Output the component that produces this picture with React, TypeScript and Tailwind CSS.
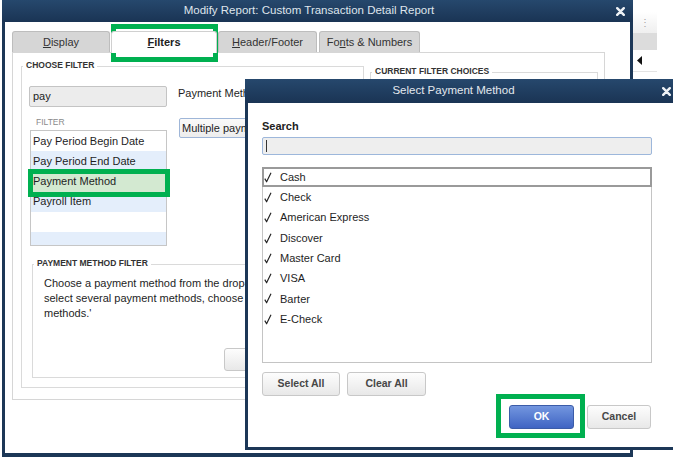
import type { ReactNode } from "react";

const FILTER_ROWS = [
  { label: "Pay Period Begin Date", tone: "bg-white" },
  { label: "Pay Period End Date", tone: "bg-[#e4eefb]" },
  { label: "Payment Method", tone: "bg-[#d3e9d1]" },
  { label: "Payroll Item", tone: "bg-[#e4eefb]" },
  { label: "", tone: "bg-white" },
  { label: "", tone: "bg-[#e4eefb]" },
];

const PAYMENT_METHODS = [
  "Cash",
  "Check",
  "American Express",
  "Discover",
  "Master Card",
  "VISA",
  "Barter",
  "E-Check",
];

function CloseX() {
  return (
    <svg width="9" height="9" viewBox="0 0 9 9">
      <path d="M1.2 1.2L7.8 7.8M7.8 1.2L1.2 7.8" stroke="#eef2f6" strokeWidth="2.4" strokeLinecap="round" />
    </svg>
  );
}

function Tick() {
  return (
    <svg width="8" height="11" viewBox="0 0 8 11" className="shrink-0">
      <path d="M0.8 6.6L2.6 9.8L7 0.8" fill="none" stroke="#222" strokeWidth="1.15" strokeLinejoin="round" />
    </svg>
  );
}

function Group({ title, className, children }: { title: string; className: string; children?: ReactNode }) {
  return (
    <div className={`border border-[#dadada] ${className}`}>
      <div className="-mt-[7px] ml-[1px] w-fit bg-white px-[3px] text-[8.5px] font-bold leading-[11px] text-[#333]">
        {title}
      </div>
      {children}
    </div>
  );
}

function Tab({ children, width, active }: { children: ReactNode; width: string; active?: boolean }) {
  return (
    <div
      className={`flex items-center justify-center rounded-t-[3px] border border-b-0 text-[11px] ${width} ${
        active
          ? "relative z-10 -mb-px h-[22px] border-[#d0d0d0] bg-white font-bold text-[#222]"
          : "h-[21px] border-[#bdbdbd] bg-[#d6d6d6] text-[#333]"
      }`}
    >
      {children}
    </div>
  );
}

const grayButton =
  "flex items-center justify-center rounded-[3px] border border-[#c8c8c8] bg-gradient-to-b from-[#fdfdfd] to-[#e8e8e8] text-[10.5px] font-bold text-[#474747]";

export default function App() {
  return (
    <div className="relative h-[457px] w-[673px] overflow-hidden bg-white font-['Liberation_Sans',Arial,sans-serif] text-[#1e1e1e]">
      {/* strip of the app window behind */}
      <div className="absolute left-[633px] top-0 w-[24px]">
        <div className="h-[12px]" />
        <div className="flex h-[21px] items-center justify-center bg-gradient-to-b from-white to-[#efefef] text-[10px] leading-none text-[#a3a3a3]">
          ⋮
        </div>
        <div className="h-[17px] bg-[#dcdcdc]" />
        <div className="flex h-[22px] items-center border-b border-[#e4e4e4] pl-[4px]">
          <svg width="5" height="9" viewBox="0 0 5 9">
            <polygon points="5,0 5,9 0,4.5" fill="#111" />
          </svg>
        </div>
      </div>

      {/* Modify Report window */}
      <div className="absolute left-[2px] top-0 flex h-[457px] w-[631px] flex-col bg-[#1c3757]">
        <div className="flex h-[22px] shrink-0 items-center bg-gradient-to-b from-[#26486d] to-[#1a3454]">
          <div className="w-[614px] text-center text-[11.5px] text-[#dfe5ec]">
            Modify Report: Custom Transaction Detail Report
          </div>
          <CloseX />
        </div>

        <div className="mx-[3px] mb-[4px] flex-1 bg-white pl-[7px]">
          <div className="mt-[9px] flex items-end">
            <Tab width="w-[98px]">
              <span className="underline">D</span>isplay
            </Tab>
            <div className="ml-[1px]">
              <Tab width="w-[106px]" active>
                <span className="underline">F</span>ilters
              </Tab>
            </div>
            <div className="ml-[1px]">
              <Tab width="w-[99px]">
                <span className="underline">H</span>eader/Footer
              </Tab>
            </div>
            <div className="ml-[2px]">
              <Tab width="w-[101px]">
                Fo<span className="underline">n</span>ts &amp; Numbers
              </Tab>
            </div>
          </div>

          <div className="flex h-[348px] w-[593px] border border-[#d6d6d6] pb-[11px] pl-[8px] pr-[6px] pt-[13px]">
            <Group title="CHOOSE FILTER" className="flex w-[343px] shrink-0 flex-col">
              <div className="ml-[7px] mt-[15px] flex">
                <div className="w-[138px]">
                  <div className="flex h-[21px] items-center rounded-[2px] border border-[#c4c4c4] bg-[#ececec] px-[3px] text-[11px]">
                    pay
                  </div>
                  <div className="ml-[7px] mt-[10px] text-[8.5px] leading-[10px] text-[#8a8a8a]">FILTER</div>
                  <div className="ml-[1px] mt-[3px] h-[116px] w-[137px] overflow-hidden border border-[#c6c6c6]">
                    {FILTER_ROWS.map((r, i) => (
                      <div key={i} className={`flex h-[20.2px] items-center px-[2px] text-[11px] ${r.tone}`}>
                        {r.label}
                      </div>
                    ))}
                  </div>
                </div>
                <div className="ml-[11px] flex-1">
                  <div className="text-[11px] leading-[14px]">Payment Method</div>
                  <div className="ml-[1px] mt-[18px] flex h-[20px] w-[170px] items-center rounded-[2px] border border-[#9fb6d8] bg-gradient-to-b from-[#fafafa] to-[#ededed] px-[2px] text-[11px]">
                    Multiple payment methods
                  </div>
                </div>
              </div>

              <Group title="PAYMENT METHOD FILTER" className="mx-[10px] mt-[18px] pb-[6px]">
                <p className="mt-[7px] pl-[11px] text-[11px] leading-[15px]">
                  Choose a payment method from the drop-down list. To
                  <br />
                  select several payment methods, choose 'Multiple payment
                  <br />
                  methods.'
                </p>
                <div className="mt-[27px] flex justify-end pr-[8px]">
                  <div className={`${grayButton} h-[23px] w-[120px]`}>Select...</div>
                </div>
              </Group>
            </Group>

            <Group title="CURRENT FILTER CHOICES" className="ml-[6px] mt-[6px] flex-1" />
          </div>
        </div>
      </div>

      {/* Select Payment Method dialog */}
      <div className="absolute left-[245px] top-[79px] flex h-[371px] w-[440px] flex-col bg-[#1c3757]">
        <div className="flex h-[24px] shrink-0 items-center bg-gradient-to-b from-[#26486d] to-[#1a3454]">
          <div className="w-[417px] text-center text-[11.5px] text-[#e3e8ee]">Select Payment Method</div>
          <CloseX />
        </div>
        <div className="mb-[3px] ml-[3px] flex-1 bg-white pl-[14px]">
          <div className="w-[390px]">
            <div className="pt-[17px] text-[11px] font-bold leading-[13px] text-[#222]">Search</div>
            <div className="mt-[4px] flex h-[18px] items-center rounded-[2px] border border-[#9db7db] bg-[#eeeeee] pl-[3px]">
              <div className="h-[12px] w-px bg-[#333]" />
            </div>
            <div className="mt-[12px] h-[196px] border border-[#c4c4c4]">
              {PAYMENT_METHODS.map((m, i) => (
                <div
                  key={m}
                  className={`flex h-[20.3px] items-center text-[11px] ${
                    i === 0 ? "-mx-px -mt-px border-2 border-[#9a9a9a]" : "pl-px"
                  }`}
                >
                  <span className="flex w-[16px]">
                    <Tick />
                  </span>
                  <span>{m}</span>
                </div>
              ))}
            </div>
            <div className="mt-[9px] flex gap-[7px]">
              <div className={`${grayButton} h-[24px] w-[78px]`}>Select All</div>
              <div className={`${grayButton} h-[24px] w-[79px]`}>Clear All</div>
            </div>
            <div className="mr-px mt-[9px] flex justify-end gap-[13px]">
              <div className="flex h-[24px] w-[65px] items-center justify-center rounded-[3px] border border-[#3b5ca8] bg-gradient-to-b from-[#7396df] to-[#4064c3] text-[10.5px] font-bold text-white">
                OK
              </div>
              <div className={`${grayButton} h-[24px] w-[64px]`}>Cancel</div>
            </div>
          </div>
        </div>
      </div>

      {/* green call-out frames */}
      <div className="absolute left-[111px] top-[24px] h-[38px] w-[107px] border-[5px] border-[#00b050]" />
      <div className="absolute left-[28px] top-[169px] h-[28px] w-[142px] border-[5px] border-[#00b050]" />
      <div className="absolute left-[496px] top-[394px] h-[44px] w-[89px] border-[5px] border-[#00b050]" />
    </div>
  );
}
